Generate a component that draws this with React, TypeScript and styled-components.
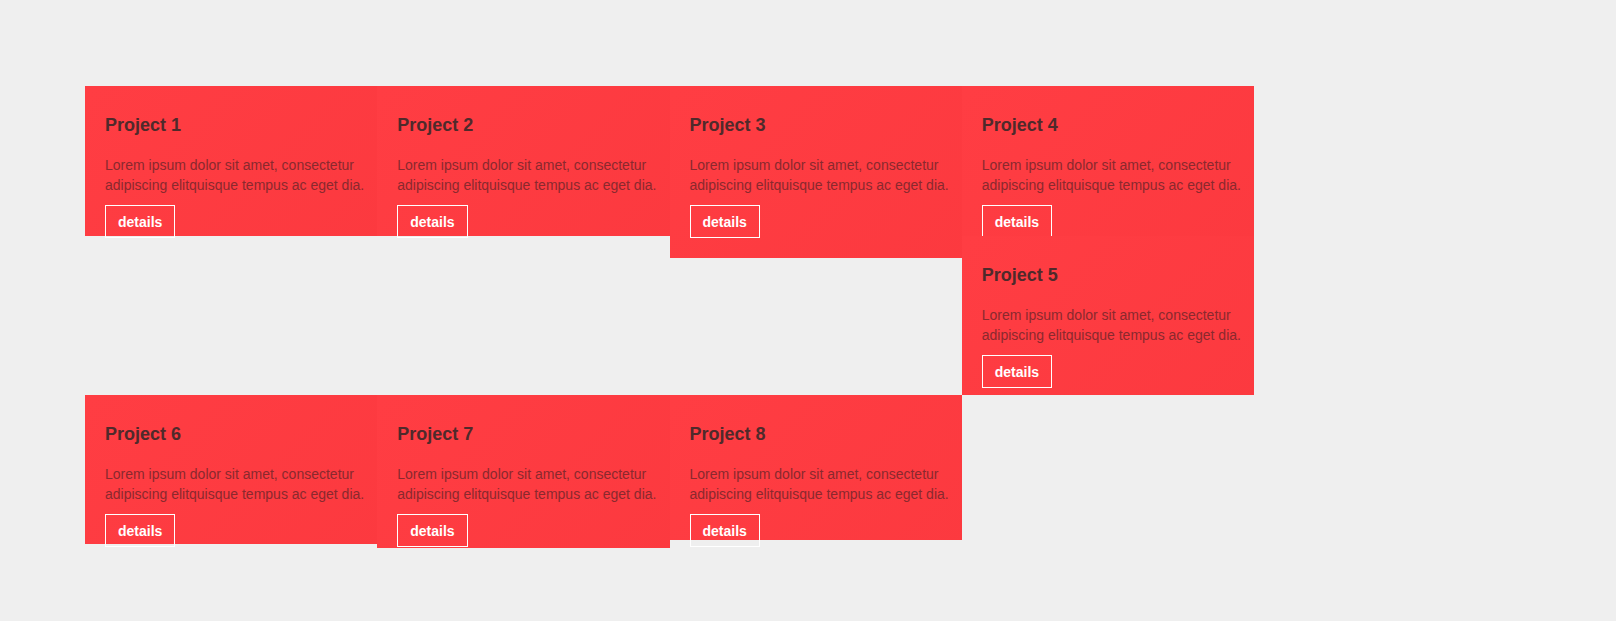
import React from "react";
import styled, { createGlobalStyle } from "styled-components";

const GlobalStyle = createGlobalStyle`
  html, body {
    margin: 0;
    padding: 0;
    background: #efefef;
    font-family: "Liberation Sans", Arial, Helvetica, sans-serif;
  }
  * { box-sizing: border-box; }
`;

const Page = styled.main`
  padding: 86px 0 0 85px;
  min-height: 621px;
`;

const Board = styled.section`
  width: 1169px;
  &::after {
    content: "";
    display: table;
    clear: both;
  }
`;

const Card = styled.article<{ $h: number }>`
  float: left;
  width: 25%;
  height: ${(p) => p.$h}px;
  padding: 28px 10px 0 20px;
  background: #ff3a40;
  background-image: linear-gradient(135deg, rgba(255, 255, 255, 0.015), rgba(0, 0, 0, 0.01));
`;

const Title = styled.h3`
  margin: 0 0 19px;
  font-size: 18px;
  line-height: 22px;
  font-weight: 700;
  color: #4f2a2b;
`;

const Text = styled.p`
  margin: 0 0 10px;
  font-size: 14px;
  line-height: 20px;
  color: #8a292e;
`;

const DetailsButton = styled.button`
  display: inline-block;
  height: 33px;
  margin: 0;
  padding: 1px 12px 0;
  border: 1px solid #ffffff;
  background: transparent;
  color: #ffffff;
  font-family: inherit;
  font-size: 14px;
  font-weight: 700;
  line-height: 30px;
  cursor: pointer;
`;

const projects = [
  { name: "Project 1", h: 150 },
  { name: "Project 2", h: 150 },
  { name: "Project 3", h: 172 },
  { name: "Project 4", h: 150 },
  { name: "Project 5", h: 159 },
  { name: "Project 6", h: 149 },
  { name: "Project 7", h: 153 },
  { name: "Project 8", h: 145 },
];

export default function App() {
  return (
    <>
      <GlobalStyle />
      <Page>
        <Board>
          {projects.map((p) => (
            <Card key={p.name} $h={p.h}>
              <Title>{p.name}</Title>
              <Text>
                Lorem ipsum dolor sit amet, consectetur adipiscing elitquisque tempus ac eget dia.
              </Text>
              <DetailsButton type="button">details</DetailsButton>
            </Card>
          ))}
        </Board>
      </Page>
    </>
  );
}
